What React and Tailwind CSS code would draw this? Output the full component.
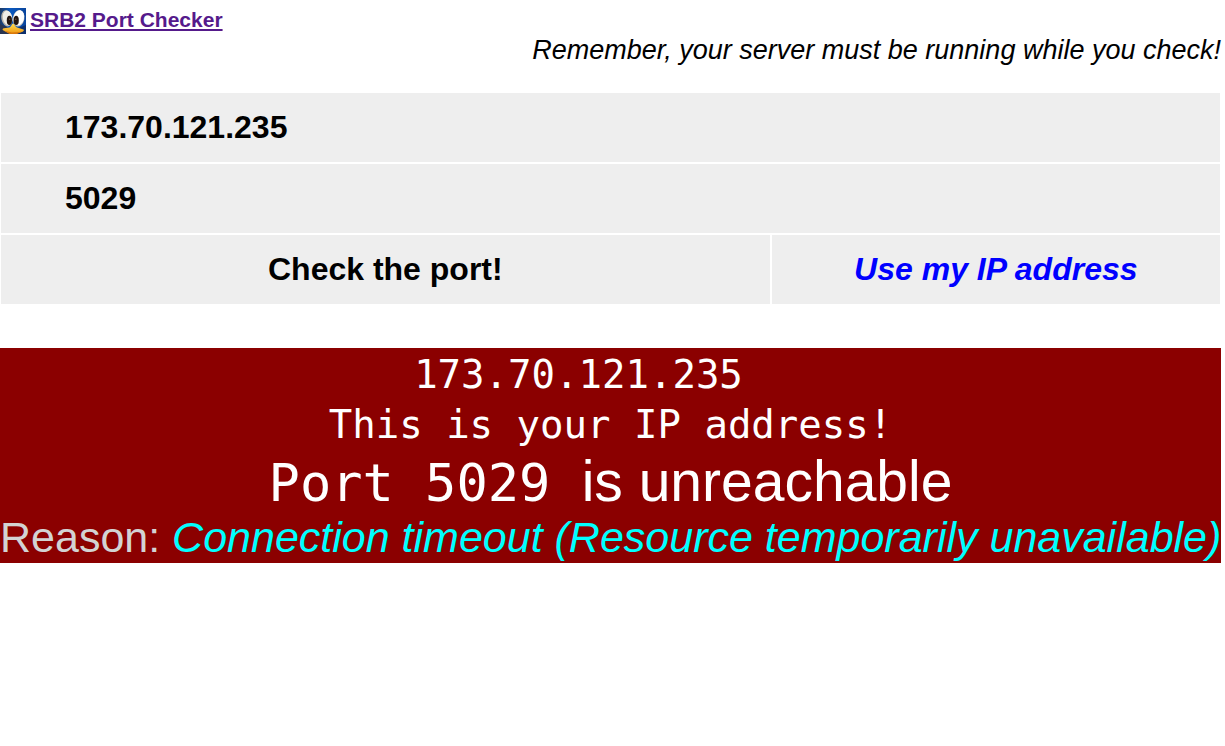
import React, { useState } from 'react';

const OWN_IP = '173.70.121.235';

/** Duck mascot shown beside the page title. */
const MascotIcon = () => (
  <svg viewBox="0 0 26 26" className="w-[26px] h-[26px] shrink-0" aria-hidden="true">
    <defs>
      <linearGradient id="sky" x1="0" y1="0" x2="1" y2="0">
        <stop offset="0" stopColor="#1c3a66" />
        <stop offset="0.4" stopColor="#0a58bf" />
        <stop offset="1" stopColor="#0a459c" />
      </linearGradient>
      <linearGradient id="bill" x1="0" y1="0" x2="0" y2="1">
        <stop offset="0" stopColor="#ffdc50" />
        <stop offset="1" stopColor="#f09a14" />
      </linearGradient>
    </defs>
    <rect width="26" height="26" fill="url(#sky)" />
    <path d="M0 16 L7 19 L12 26 H0 Z" fill="#2a3550" />
    <path d="M14 26 L18 20 L26 17 V26 Z" fill="#0d2f6c" />
    <ellipse cx="6.8" cy="10.3" rx="5.4" ry="8.2" fill="#b9b4aa" transform="rotate(-12 6.8 10.3)" />
    <ellipse cx="7.6" cy="9.9" rx="4.7" ry="7.4" fill="#f0eee8" transform="rotate(-12 7.6 9.9)" />
    <ellipse cx="18.6" cy="10.3" rx="5.8" ry="8.3" fill="#c9c5bc" transform="rotate(12 18.6 10.3)" />
    <ellipse cx="18.8" cy="9.8" rx="5.2" ry="7.6" fill="#ffffff" transform="rotate(12 18.8 9.8)" />
    <ellipse cx="9.4" cy="12.4" rx="2.6" ry="4.6" fill="#21140f" />
    <ellipse cx="16.2" cy="12.4" rx="2.6" ry="4.6" fill="#21140f" />
    <circle cx="9.6" cy="11.2" r="0.8" fill="#6b5242" />
    <circle cx="15.8" cy="11.2" r="0.8" fill="#6b5242" />
    <path
      d="M13 15.8 C14.5 15.8 15 18.6 17 19.6 L23.5 21.6 C24.5 22.2 23.5 23.6 22 24 L16 25.4 H9 L3.5 22.6 C2 21.8 2.4 20.4 4 20.2 L9.5 19.6 C11.5 18.6 11.5 15.8 13 15.8 Z"
      fill="url(#bill)"
    />
    <path d="M4 22.8 L12 24.4 L22 23.8 L17 26 H10 Z" fill="#d9780a" />
  </svg>
);

const FIELD =
  'block w-full h-[69px] px-16 bg-[#eeeeee] text-[32px] leading-10 font-bold text-black outline-none';

const ACTION = 'h-[69px] pb-0.5 bg-[#eeeeee] text-[32px] leading-10 font-bold cursor-pointer';

const App = () => {
  const [address, setAddress] = useState(OWN_IP);
  const [port, setPort] = useState('5029');

  return (
    <div className="pt-2 pr-1 bg-white text-black font-['Liberation_Sans',Arial,sans-serif]">
      {/* ── Title ── */}
      <header>
        <h1 className="flex items-start gap-1 h-[26px] text-[21px] leading-6 font-bold">
          <MascotIcon />
          <a href="#" className="text-[#551a8b] underline">SRB2 Port Checker</a>
        </h1>
        <p className="text-right text-[27px] leading-8 italic">
          Remember, your server must be running while you check!
        </p>
      </header>

      {/* ── Query form ── */}
      <form
        className="mt-[27px] px-px grid grid-cols-[12fr_7fr] gap-0.5"
        onSubmit={(e) => e.preventDefault()}
      >
        <div className="col-span-2">
          <input
            type="text"
            aria-label="IP address"
            value={address}
            onChange={(e) => setAddress(e.target.value)}
            className={FIELD}
          />
        </div>
        <div className="col-span-2">
          <input
            type="text"
            aria-label="Port"
            value={port}
            onChange={(e) => setPort(e.target.value)}
            className={FIELD}
          />
        </div>
        <button type="submit" className={ACTION}>Check the port!</button>
        <button
          type="button"
          onClick={() => setAddress(OWN_IP)}
          className={`${ACTION} italic text-[#0000ff]`}
        >
          Use my IP address
        </button>
      </form>

      {/* ── Result ── */}
      <section className="mt-11 pt-0.5 bg-[#8b0000] text-white text-center whitespace-nowrap">
        <div className="font-['DejaVu_Sans_Mono',monospace] text-[39px] leading-[50px]">
          <p className="pr-16">173.70.121.235</p>
          <p>This is your IP address!</p>
        </div>
        <p className="text-[57px] leading-[62px]">
          <span className="font-['DejaVu_Sans_Mono',monospace] text-[52px] leading-none whitespace-pre">{'Port 5029 '}</span>
          is unreachable
        </p>
        <p className="text-[43px] leading-[51px] text-[#d3d3d3]">
          Reason: <em className="text-[#00ffff]">Connection timeout (Resource temporarily unavailable)</em>
        </p>
      </section>
    </div>
  );
};

export default App;
